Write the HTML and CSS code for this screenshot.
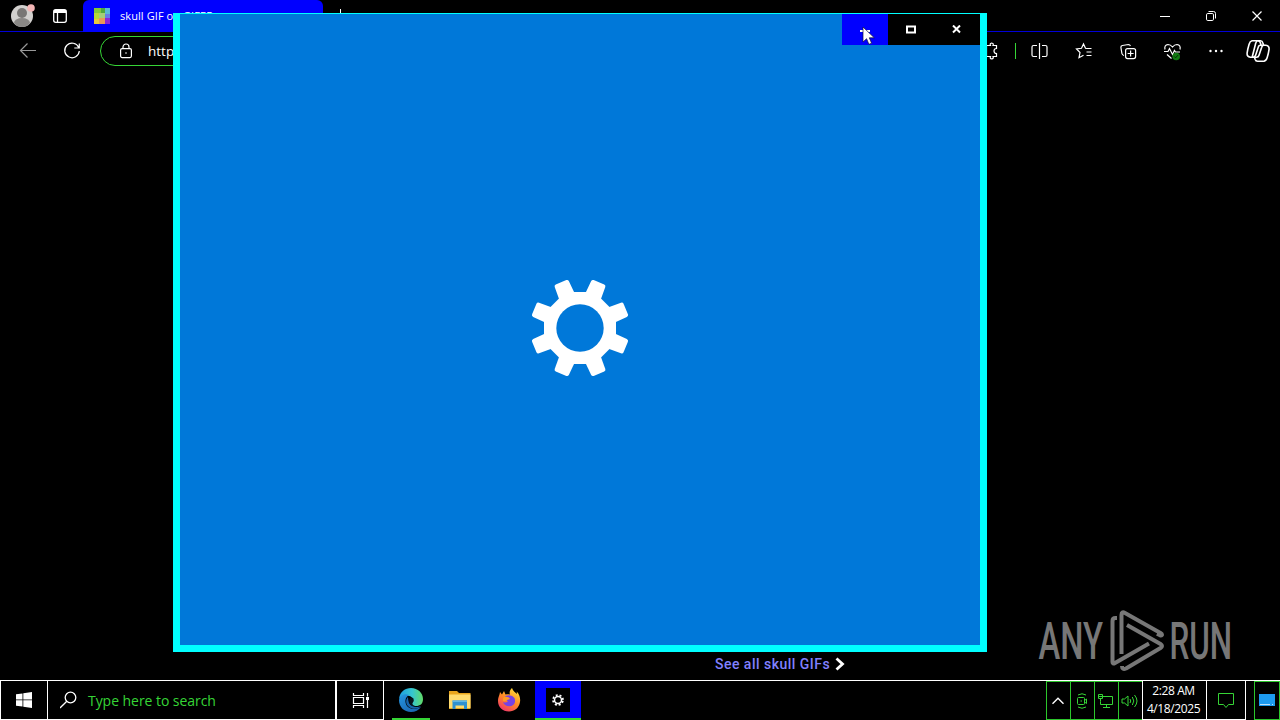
FILE: index.html
```html
<!DOCTYPE html>
<html lang="en">
<head>
<meta charset="utf-8">
<title>Desktop</title>
<link rel="stylesheet" href="styles.css">
</head>
<body>
<div class="desktop">
  <main class="browser">
    <header class="tabstrip">
      <svg class="profile" width="28" height="28" viewBox="8 2 28 28">
        <circle cx="22" cy="16" r="11" fill="#d2d0ce"/>
        <circle cx="22" cy="13" r="5" fill="#797775"/>
        <path d="M14 23a8 5 0 0 1 16 0q-3 4-8 4t-8-4z" fill="#8a8886"/>
        <circle cx="31" cy="8" r="3.800" fill="#f4b6b6"/>
      </svg>
      <svg class="workspace" width="16" height="16" viewBox="52 8 16 16" fill="none" stroke="#fff" stroke-width="1.300">
        <rect x="53.700" y="9.700" width="12.600" height="12.600" rx="2"/>
        <path d="M54 11.500h12" stroke-width="3"/><path d="M57.500 13v9"/>
      </svg>
      <div class="tab">
        <svg width="16" height="16" viewBox="0 0 16 16">
          <path fill="#84c83a" d="M0 0h7v6H0z"/><path fill="#4fa83c" d="M7 0h5v5H7z"/><path fill="#b7d838" d="M0 5h5v6H0z"/>
          <path fill="#58b8d8" d="M11 0h5v7h-5z"/><path fill="#a5cf75" d="M5 5h6v5H5z"/><path fill="#647ce8" d="M11 6h5v4h-5z"/>
          <path fill="#e8c83c" d="M0 11h5v5H0z"/><path fill="#e89858" d="M5 10h6v6H5z"/><path fill="#8a24d8" d="M11 10h5v6h-5z"/>
        </svg>
        <span class="tab-title">skull GIF on GIFER</span>
      </div>
      <svg class="newtab" width="12" height="12" viewBox="0 0 12 12" stroke="#fff" fill="none"><path d="M5.500 0v11M0 5.500h11"/></svg>
      <svg class="caption" width="104" height="16" viewBox="1158 8 104 16" fill="none" stroke="#fff" stroke-width="1">
        <path d="M1160 16.500h10"/>
        <rect x="1206.500" y="13.500" width="7" height="7" rx="1.300"/><path d="M1208.500 11.500h5q2 0 2 2v5"/>
        <path d="M1252.500 11.500l9 9M1261.500 11.500l-9 9" stroke-width="1.200"/>
      </svg>
    </header>
    <nav class="toolbar">
      <svg class="navicons" width="64" height="20" viewBox="18 41 64 20" fill="none" stroke="#fff" stroke-width="1.200">
        <path d="M36 50.500H20.500M27.500 43.500l-7 7 7 7" stroke="#999"/>
        <path d="M78.700 47.500A7.300 7.300 0 1 0 79.300 51M79.300 43.500v4.500h-5"/>
      </svg>
      <div class="address">
        <svg width="14" height="16" viewBox="0 0 14 16" fill="none" stroke="#fff" stroke-width="1.200"><rect x="1.600" y="5.600" width="10.800" height="9" rx="1.500"/><path d="M4 5.500V4a3 3 0 0 1 6 0v1.500"/><circle cx="7" cy="10" r=".8" fill="#fff" stroke="none"/></svg>
        <span>https://gifer.com</span>
      </div>
      <svg class="tools" width="294" height="26" viewBox="980 38 294 26" fill="none" stroke="#fff" stroke-width="1.200">
        <path d="M986.500 45.500h4q-1-2 1.200-2.500 2.300.5 1.300 2.500h3.500v3q-2.500 0-2.500 2.500t2.500 2.500v3h-3.500q1 2-1.300 2.500-2.200-.5-1.200-2.500h-4z"/>
        <path d="M1015.500 43v16" stroke="#36d536" stroke-width="1"/>
        <path d="M1037 45.500h-3.500q-1.500 0-1.500 1.500v8q0 1.500 1.500 1.500h3.500M1042 45.500h3.500q1.500 0 1.500 1.500v8q0 1.500-1.500 1.500H1042M1039.500 43v16"/>
        <path d="M1086.500 48.500l-1-.2-2-4.300-2 4.300-5 .7 3.500 3.500-1 5.200 4.500-2.500M1085.500 48.500h6M1086.500 52h5M1086.500 55.500h5"/>
        <path d="M1124 55.500q-1.800-.5-2.100-2l-1-6q-.2-1.700 1.500-2l6-1q1.500 0 2 1.500"/>
        <rect x="1125.600" y="48.600" width="10" height="10" rx="2"/><path d="M1130.600 50.500v6M1127.600 53.500h6"/>
        <path d="M1165 49.500q-1-4.500 3-5 2.500 0 4.500 2.500 2-2.500 4.500-2.500 4 .5 3 5M1164 51.500h4l1.500-3 3 6 2-4 1 1.500h4.500M1167 54.500l4.500 4"/>
        <circle cx="1176.200" cy="56.500" r="3.800" fill="#137a13" stroke="none"/><path d="M1174.300 56.500l1.300 1.300 2.500-2.700" stroke="#042f04" stroke-width="1"/>
        <g fill="#fff" stroke="none"><circle cx="1210.500" cy="51" r="1.200"/><circle cx="1216" cy="51" r="1.200"/><circle cx="1221.500" cy="51" r="1.200"/></g>
        <g stroke-width="1.600" stroke-linejoin="round">
          <path d="M1261 45.200l-.5-2q-.6-2.400-2.500-2.400h-6q-2 .4-2.900 3.400-1.400 4.500-2 9-.3 3.500 3.300 4h2.700q1.900 0 2.500-2l3-9q.6-1 2.200-1h5q3.600.5 3.300 4-.6 4.300-1.900 8.300-1 3.300-3.200 3.700h-6.500q-1.800 0-2.400-2l-.6-2.200"/>
          <path d="M1258 40.800h2.500q1.800 0 2.300 2l.8 2.400M1263.500 45.200q-1.300.3-1.800 2l-2.700 8q-.6 2-2.400 2h-3.500M1257.500 41q-1.200.3-1.800 2.200l-3.500 13.800"/>
        </g>
      </svg>
    </nav>
    <section class="page">
      <a class="more">See all skull GIFs<svg width="10" height="14" viewBox="0 0 10 14" fill="none" stroke="#fff" stroke-width="2.800"><path d="M1.500 1.500L7.500 7l-6 5.500"/></svg></a>
    </section>
  </main>

  <svg class="watermark" width="200" height="66" viewBox="1035 608 200 66" fill="#777" stroke="none">
    <text class="brand" transform="translate(1038.500 659) scale(.62 1)" textLength="104" lengthAdjust="spacingAndGlyphs">ANY</text>
    <text class="brand" transform="translate(1169.500 659) scale(.62 1)" textLength="101" lengthAdjust="spacingAndGlyphs">RUN</text>
    <g fill="none" stroke="#777" stroke-width="4" stroke-linejoin="round">
      <path d="M1117 618h-1.500q-3 0-3 3v41q0 2.500 2.500 1L1149 643.500"/>
      <path d="M1121.500 654v-39q0-4 3.500-2l35.500 20q3 2 0 2.500l-3.500-1.800"/>
      <path d="M1127 625l33.500 19q3 2 0 4L1126 668.500q-4 1.500-4-2.500"/>
    </g>
  </svg>

  <section class="window">
    <div class="window-buttons">
      <span class="wbtn active"><svg width="10" height="10"><path d="M0 6h10" stroke="#fff" stroke-width="2"/></svg></span>
      <span class="wbtn"><svg width="10" height="10" fill="none" stroke="#fff" stroke-width="2"><path d="M1 1.500h8v6H1z"/></svg></span>
      <span class="wbtn"><svg width="10" height="10" stroke="#fff" stroke-width="2"><path d="M1 .5l7 7M8 .5l-7 7"/></svg></span>
    </div>
    <svg class="gear" width="100" height="100" viewBox="-50 -50 100 100">
      <defs><path id="tooth" d="M-8.500-30L-7.700-47.500q.2-2 2-2H5.700q1.800 0 2 2L8.500-30z"/></defs>
      <g fill="#fff">
        <use href="#tooth" transform="rotate(22.500)"/><use href="#tooth" transform="rotate(67.500)"/><use href="#tooth" transform="rotate(112.500)"/><use href="#tooth" transform="rotate(157.500)"/>
        <use href="#tooth" transform="rotate(202.500)"/><use href="#tooth" transform="rotate(247.500)"/><use href="#tooth" transform="rotate(292.500)"/><use href="#tooth" transform="rotate(337.500)"/>
      </g>
      <path d="M-14.500-36h29L36-14.500v29L14.500 36h-29L-36 14.500v-29z" fill="#fff"/>
      <circle r="23.700" fill="#0078d9"/>
    </svg>
  </section>
  <svg class="cursor" width="14" height="20" viewBox="0 0 14 20"><path d="M1 1v15l3.600-3.300 2.300 5.600 2.700-1.100-2.300-5.400h5z" fill="#fff" stroke="#113" stroke-width=".7"/></svg>

  <footer class="taskbar">
    <div class="start"><svg width="16" height="16" fill="#fff"><path d="M0 2.300L6.500 1.400v6.100H0zM7.300 1.300L16 0v7.500H7.300zM0 8.300h6.500v6.300L0 13.700zM7.300 8.300H16V16l-8.700-1.300z"/></svg></div>
    <div class="search"><svg width="18" height="18" fill="none" stroke="#fff" stroke-width="1.300"><circle cx="10.500" cy="6.500" r="5.300"/><path d="M6.800 10.300L0 17"/></svg><span>Type here to search</span></div>
    <div class="taskview"><svg width="17" height="17" fill="none" stroke="#fff" stroke-width="1.200"><path d="M1.500 1v2.500h10V1M1.500 16v-2.500h10V16M1.500 5.500h10v6h-10zM15.500 1v3.500M15.500 8v8"/><path d="M14 5h3v3h-3z" fill="#fff" stroke="none"/></svg></div>
    <div class="apps">
      <div class="app running">
        <svg width="26" height="26" viewBox="0 0 26 26">
          <defs><linearGradient id="e1" x1="0" x2="1"><stop stop-color="#1b9de2"/><stop offset=".55" stop-color="#36c6d0"/><stop offset="1" stop-color="#61dc67"/></linearGradient><linearGradient id="e2" x1="0" x2=".8" y1="0" y2="1"><stop stop-color="#2596e1"/><stop offset="1" stop-color="#1a63b0"/></linearGradient></defs>
          <path d="M1 12C2 4.500 7 1 13 1c7 0 12 5 12 11 0 5-3 7-7 7-3 0-5-1-4-3 1.700-2 1-6-2.500-7C7 8 3 9 1 12z" fill="url(#e1)"/>
          <path d="M1 13c1-5 6-7 10-5-4 2-5 8-1 12 4 3 9 2 13 0-2 3-6 5-10 5C6 25 1 20 1 13z" fill="url(#e2)"/>
          <path d="M10 10c-3 3-2 8 1 10 4 3 9 2 12-1-4 2-10 1-12-3q-1-3-1-6z" fill="#1664ad"/>
          <path d="M12 11q2-1 3.500.5 1 2-1 4.500-.5 2 2.500 3-4 .5-5.500-3-1-3 .5-5z" fill="#07131d"/>
        </svg>
      </div>
      <div class="app"><svg width="22" height="20" viewBox="0 0 22 20"><path d="M0 1h8l2 2h11.500v16H0z" fill="#e9a51c"/><path d="M0 4.500h21.500V18H0z" fill="#ffdb6e"/><path d="M3.500 19v-8.500h14.500V19h-3v-3.500H6.500V19z" fill="#2f91d0"/><path d="M3.500 10.500h14.500V12H3.500z" fill="#60b7e5"/></svg></div>
      <div class="app"><svg width="24" height="24" viewBox="0 0 24 24">
        <defs><linearGradient id="f1" x1=".8" y1="0" x2=".2" y2="1"><stop stop-color="#ffe13c"/><stop offset=".5" stop-color="#ff8a24"/><stop offset="1" stop-color="#f0306e"/></linearGradient></defs>
        <path d="M15 0c1 3 3 4 5 6l-.3-2.500C23 7 23.500 11 23 14c-1 6-5.500 9.500-11 9.500C5.500 23.500 1 19 1 13c0-4 1.500-5 2-9l2 2.500L7 3l1.500 3.500c2-.5 3-.5 4.500 0-1-2 0-5 2-6.500z" fill="url(#f1)"/>
        <path d="M8.500 8q6-2 9 2 2 6-3 8-7 1-8.500-4 3 1.500 5-.8L7.500 11z" fill="#7542e5"/><path d="M6 10q2-2 6-.5l1 1.500-3 1q-1 2-4 1z" fill="#ff9b23"/>
      </svg></div>
      <div class="app running selected"><span class="tile"><svg width="12" height="12" viewBox="-6 -6 12 12" fill="none" stroke="#fff"><circle r="3.500" stroke-width="1.500"/><circle r="5" stroke-width="1.700" stroke-dasharray="2 1.927" stroke-dashoffset="-1"/></svg></span></div>
    </div>
    <div class="tray">
      <div class="cell"><svg width="12" height="8" fill="none" stroke="#fff" stroke-width="1.400"><path d="M.5 6.800L6 1.300l5.500 5.500"/></svg></div>
      <div class="cell"><svg width="14" height="16" fill="none" stroke="#36d536"><rect x="2.500" y="4.500" width="7" height="7" rx="1"/><path d="M9.500 7.500l2-1.500v4.500l-2-1.500M3 2q4-2.500 8 0M3 14q4 2.500 8 0M5.500 8h1.500"/></svg></div>
      <div class="cell"><svg width="17" height="16" fill="none" stroke="#36d536"><path d="M5.500 3.500h10v8h-12v-3M9.500 11.500v3M6 14.500h7M1.500 1.500h4v4h-4zM3.500 5.500v3M2 3.500h3"/></svg></div>
      <div class="cell"><svg width="18" height="14" fill="none" stroke="#36d536"><path d="M1 5v4h2.500L7 12V2L3.500 5zM9 5q1.500 2 0 4M11.300 3q3 4 0 8M13.500 1q5 6 0 12"/></svg></div>
      <div class="clock"><span>2:28 AM</span><span>4/18/2025</span></div>
      <div class="notice"><svg width="17" height="17" fill="none" stroke="#36d536"><path d="M.5 1.500h15v11h-5l-2.500 3-2.500-3h-5z"/></svg></div>
      <div class="desk"><svg width="16" height="13"><path d="M0 0h16v12H0z" fill="#1d9bf0"/><path d="M1 10.500h10M13 10.500h1" stroke="#bfe2fc" stroke-width="1"/></svg></div>
    </div>
  </footer>
</div>
</body>
</html>
```

FILE: styles.css
```css
* { box-sizing: border-box; }
body { margin: 0; background: #000; overflow: hidden; font-family: "Open Sans", "Noto Sans", sans-serif; color: #fff; }
svg { display: block; flex: none; }
.desktop { position: relative; width: 1280px; height: 720px; overflow: hidden; background: #000; display: flex; flex-direction: column; }
.browser { height: 680px; display: flex; flex-direction: column; }
.tabstrip { height: 32px; display: flex; align-items: center; border-bottom: 1px solid #0000d8; padding-left: 8px; }
.workspace { margin-left: 16px; }
.tab { width: 240px; height: 32px; margin: 0 0 -1px 15px; background: #00f; border-radius: 6px 6px 0 0; display: flex; align-items: center; padding-left: 11px; gap: 10px; }
.tab-title { font-size: 11px; line-height: 16px; white-space: nowrap; letter-spacing: .08px; }
.newtab { margin: -2px 0 0 12px; }
.caption { margin-left: auto; margin-right: 18px; }
.toolbar { height: 40px; display: flex; align-items: center; padding: 0 6px 2px 18px; }
.address { width: 830px; height: 30px; margin-left: 18px; border: 1px solid #36d536; border-radius: 15px; display: flex; align-items: center; padding-left: 18px; gap: 15px; font-size: 13.5px; }
.tools { margin-left: auto; background: #000; }
.page { flex: 1; display: flex; align-items: flex-end; padding: 0 0 7px 715px; }
.more { font: 500 14px/18px Roboto, sans-serif; letter-spacing: .48px; color: #8080ff; width: 130px; display: flex; align-items: center; justify-content: space-between; white-space: nowrap; }
.watermark { position: absolute; left: 1035px; top: 608px; }
.brand { font: 500 52px Roboto, sans-serif; }
.window { position: absolute; left: 173px; top: 13px; width: 814px; height: 639px; border: 7px solid #0ff; border-top-width: 1px; background: #0078d9; display: flex; flex-direction: column; align-items: center; }
.window-buttons { align-self: flex-end; display: flex; }
.wbtn { width: 46px; height: 31px; background: #000; display: flex; align-items: center; justify-content: center; }
.wbtn.active { background: #00f; }
.gear { margin-top: 233px; }
.cursor { position: absolute; left: 862px; top: 26px; }
.taskbar { height: 40px; border-top: 1px solid #fff; display: flex; }
.start, .search, .taskview { border: solid #fff; border-width: 0 1px 1px 0; display: flex; align-items: center; }
.start { width: 48px; border-left-width: 1px; justify-content: center; }
.search { width: 288px; padding-left: 12px; gap: 10px; font-size: 14px; color: #36d536; }
.search span { white-space: nowrap; letter-spacing: -.05px; }
.taskview { width: 48px; justify-content: center; border-left-width: 1px; }
.apps { display: flex; padding-left: 4px; gap: 3px; }
.app { width: 46px; height: 39px; display: flex; align-items: center; justify-content: center; border-bottom: 2px solid transparent; border-top: 1px solid transparent; }
.running { width: 38px; margin: 0 4px; border-bottom-color: #36d536; }
.selected { width: 46px; margin: 0; background: #00f; }
.tile { width: 24px; height: 24px; background: #000; display: flex; align-items: center; justify-content: center; }
.tray { margin-left: auto; display: flex; }
.cell { width: 24px; border: 1px solid #2cc62c; border-right: 0; padding-right: 2px; display: flex; align-items: center; justify-content: center; }
.clock { width: 65px; border: 1px solid #fff; border-top: 0; padding-right: 2px; display: flex; flex-direction: column; align-items: center; justify-content: center; font-size: 12px; line-height: 18px; letter-spacing: -.4px; }
.notice { width: 39px; border: 1px solid #fff; border-width: 0 1px 1px 0; display: flex; align-items: center; justify-content: center; }
.desk { width: 26px; margin-left: 8px; border: 1px solid #2cc62c; display: flex; align-items: center; justify-content: center; }
```
